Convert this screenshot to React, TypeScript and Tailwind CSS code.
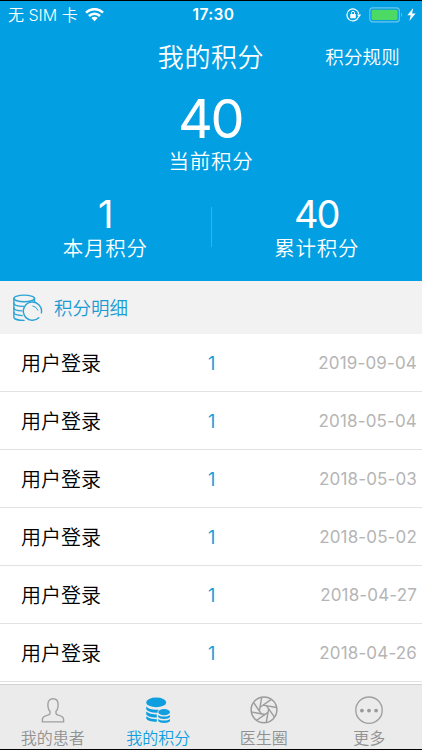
import type { ReactNode } from 'react'

const records = [
  { title: '用户登录', points: 1, date: '2019-09-04' },
  { title: '用户登录', points: 1, date: '2018-05-04' },
  { title: '用户登录', points: 1, date: '2018-05-03' },
  { title: '用户登录', points: 1, date: '2018-05-02' },
  { title: '用户登录', points: 1, date: '2018-04-27' },
  { title: '用户登录', points: 1, date: '2018-04-26' },
]

function WifiIcon() {
  return (
    <svg className="ml-[7px] h-[14px] w-[19px]" viewBox="0 0 19 14" fill="none" stroke="currentColor" strokeWidth="2.6">
      <path d="M1 4.7a12 12 0 0 1 17 0" />
      <path d="M4 8a7.8 7.8 0 0 1 11 0" />
      <path d="M9.5 13.2 6.3 10a4.5 4.5 0 0 1 6.4 0z" fill="currentColor" stroke="none" />
    </svg>
  )
}

function RotationLockIcon() {
  return (
    <svg className="h-[14px] w-[16px]" viewBox="0 0 16 14" fill="none" stroke="currentColor" strokeWidth="1.2">
      <path d="M12.6 8.8a6 6 0 1 1 .2-3" />
      <path d="M10.9 6.4h4.3l-2.1 2.9z" fill="currentColor" stroke="none" />
      <path d="M5.5 6.3V4.8a1.5 1.5 0 0 1 3 0v1.5" strokeWidth="1" />
      <rect x="4.2" y="6" width="5.6" height="4.2" rx=".4" fill="currentColor" stroke="none" />
    </svg>
  )
}

function BatteryIcon() {
  return (
    <svg className="ml-[7px] h-[16px] w-[34px]" viewBox="0 0 34 16">
      <rect x=".8" y=".9" width="29.6" height="14" rx="3" fill="none" stroke="#6cc5ef" strokeWidth="1.1" />
      <rect x="2.6" y="2.7" width="26" height="10.4" rx="1.4" fill="#4cd964" />
      <path d="M32 5.6c1.2.6 1.2 4 0 4.6z" fill="#6cc5ef" />
    </svg>
  )
}

function StatusBar() {
  return (
    <div className="grid h-[27px] grid-cols-3 items-center text-[16px] leading-none">
      <div className="flex items-center pl-[8px]">
        <span className="whitespace-nowrap font-[350]">无 SIM 卡</span>
        <WifiIcon />
      </div>
      <div className="pl-[5px] pt-px text-center text-[15.5px] font-semibold tracking-[0.4px]">17:30</div>
      <div className="flex items-center justify-end pr-[6px]">
        <RotationLockIcon />
        <BatteryIcon />
        <svg className="ml-[4px] h-[13px] w-[9px]" viewBox="0 0 9 13" fill="currentColor">
          <path d="M6.2 0 .4 7.3h3.3L2.4 13l6.2-7.6H5.1z" />
        </svg>
      </div>
    </div>
  )
}

/**
 * Number over a label, used for the two smaller totals.
 */
function Stat({ value, label }: { value: number; label: string }) {
  return (
    <div className="flex flex-1 flex-col items-center">
      <span className="pr-px text-[38px] leading-[38px] tracking-[-1.9px]">{value}</span>
      <span className="mt-[5px] text-[20.5px] font-[350] leading-[22px] tracking-[0.7px]">{label}</span>
    </div>
  )
}

function CoinsOutlineIcon() {
  return (
    <svg className="h-[28px] w-[30px]" viewBox="0 0 30 28" fill="none" stroke="#2ba3d6" strokeWidth="1.4" strokeLinecap="round">
      <ellipse cx="11.2" cy="4.4" rx="10.3" ry="3.3" />
      <path d="M.9 4.4v18.8c0 1.8 4.6 3.2 10.2 3.2" />
      <path d="M21.5 4.4v3.4" />
      <path d="M.9 9.2c0 1.8 4.4 3.1 9.8 3.2" />
      <path d="M.9 13.9c0 1.6 3.6 2.8 8 3" />
      <path d="M.9 18.6c0 1.6 3.6 2.8 8.3 3" />
      <path d="M25.8 23.7A9.1 9.1 0 1 1 28.4 18.9" />
      <path d="M19.8 12a6.3 6.3 0 0 1 5.1 4.2" strokeWidth="1" />
    </svg>
  )
}

function PersonIcon() {
  return (
    <svg className="h-[28px] w-[28px]" viewBox="0 0 28 28" fill="none" stroke="#a0a0a0" strokeWidth="1.4" strokeLinejoin="round">
      <path d="M11 16.3C9.2 14.7 8.9 12.6 8.9 9.4 8.9 5.7 10.8 3.8 14 3.8s5.1 1.9 5.1 5.6c0 3.2-.3 5.3-2.1 6.9v2.1c0 1 .8 1.3 2.4 1.8 3.5 1 5.2 1.7 5.2 4.2v2.5H3.4v-2.5c0-2.5 1.7-3.2 5.2-4.2 1.6-.5 2.4-.8 2.4-1.8z" />
    </svg>
  )
}

function CoinsIcon() {
  return (
    <svg className="h-[28px] w-[28px] overflow-visible" viewBox="0 0 28 28" fill="#0f9fe0">
      <ellipse cx="12.2" cy="7.4" rx="10" ry="4.9" />
      <path d="M2.2 11.6c2 2.3 5.7 3.2 10 3.2 1 0 1.9 0 2.8-.2-1 .8-1.5 1.7-1.5 3.1-5.2.3-9.7-.8-11.3-3.4z" />
      <path d="M2.2 16.6c2.2 2.1 6.3 2.9 10.6 2.9v3c-5.200.1-9.300-1-10.600-3.300z" />
      <path d="M2.2 21.300c2.200 2.100 6.300 2.900 10.600 2.900v2.600c-5.200.1-9.300-1-10.600-3.200z" />
      <ellipse cx="20.100" cy="17.100" rx="5.900" ry="3.100" />
      <path d="M14.200 19.900c1.200 1.200 3.400 1.700 5.900 1.700s4.700-.5 5.900-1.700v2.100c-.8 1.300-3 2-5.900 2s-5.100-.7-5.900-2z" />
      <path d="M14.200 23.900c1.200 1.200 3.400 1.700 5.900 1.700s4.700-.5 5.900-1.700v2c-.8 1.300-3 2-5.900 2s-5.100-.7-5.900-2z" />
    </svg>
  )
}

function ApertureIcon() {
  return (
    <svg className="h-[28px] w-[28px] overflow-visible" viewBox="0 0 28 28" fill="none" stroke="#9c9c9c" strokeWidth="1.4">
      <circle cx="14" cy="14.8" r="12.9" strokeWidth="1.5" />
      {[10, 55, 100, 145, 190, 235, 280, 325].map((angle) => (
        <path key={angle} d="M12.2 10.4H26" transform={`rotate(${angle} 14 14.8)`} />
      ))}
    </svg>
  )
}

function MoreIcon() {
  return (
    <svg className="h-[28px] w-[28px] overflow-visible" viewBox="0 0 28 28" fill="#999">
      <circle cx="14" cy="15.2" r="13.2" fill="none" stroke="#a0a0a0" strokeWidth="1.4" />
      <circle cx="6.9" cy="15.6" r="1.9" />
      <circle cx="14" cy="15.6" r="1.9" />
      <circle cx="21.1" cy="15.6" r="1.9" />
    </svg>
  )
}

function Tab({ label, active, children }: { label: string; active?: boolean; children: ReactNode }) {
  return (
    <div className={`flex flex-1 flex-col items-center pt-[10px] ${active ? 'text-[#0f9fe0]' : 'text-[#919191]'}`}>
      {children}
      <span className="mt-[7px] text-[16px] font-[350] leading-[16px]">{label}</span>
    </div>
  )
}

export default function App() {
  return (
    <div className="flex h-[750px] w-[422px] flex-col overflow-hidden border-y border-black bg-white font-['Inter','Noto_Sans_CJK_SC',sans-serif]">
      <header className="h-[280px] shrink-0 bg-[#02a0e2] text-white">
        <StatusBar />
        <div className="grid h-[58px] grid-cols-[1fr_auto_1fr] items-center pt-px">
          <span />
          <h1 className="text-[26px] font-[350] leading-none tracking-[0.6px]">我的积分</h1>
          <span className="pr-[22px] text-right text-[18.5px] font-[350] leading-none tracking-[0.2px]">积分规则</span>
        </div>
        <div className="flex flex-col items-center pt-[8px]">
          <span className="pr-[2px] text-[54px] leading-[50px] tracking-[-2.4px]">40</span>
          <span className="mt-[7px] text-[20.5px] font-[350] leading-[22px] tracking-[0.7px]">当前积分</span>
        </div>
        <div className="flex pt-[22px]">
          <Stat value={1} label="本月积分" />
          <div className="mt-[12px] h-[40px] w-px bg-[#35b2e8]" />
          <Stat value={40} label="累计积分" />
        </div>
      </header>

      <div className="flex h-[53px] shrink-0 items-center bg-[#f2f2f2] pl-[13px]">
        <CoinsOutlineIcon />
        <h2 className="ml-[11px] pt-[2px] text-[18.5px] font-[350] leading-none text-[#1a9bd3]">积分明细</h2>
      </div>

      <ul className="h-[350px] shrink-0 overflow-hidden">
        {records.map((record) => (
          <li key={record.date} className="flex h-[58px] items-center border-b border-[#e2e2e2] pl-[21px] pr-[5px] pt-[3px]">
            <span className="w-[187px] text-[20px] font-[350] leading-none text-black">{record.title}</span>
            <span className="text-[18px] leading-none text-[#149fdb]">{record.points}</span>
            <span className="ml-auto pb-[2px] text-[17px] leading-none tracking-[0.15px] text-[#b5b5b5]">{record.date}</span>
          </li>
        ))}
      </ul>

      <nav className="flex flex-1 border-t border-[#d2d2d2] bg-[#ebebeb]">
        <Tab label="我的患者">
          <PersonIcon />
        </Tab>
        <Tab label="我的积分" active>
          <CoinsIcon />
        </Tab>
        <Tab label="医生圈">
          <ApertureIcon />
        </Tab>
        <Tab label="更多">
          <MoreIcon />
        </Tab>
      </nav>
    </div>
  )
}
